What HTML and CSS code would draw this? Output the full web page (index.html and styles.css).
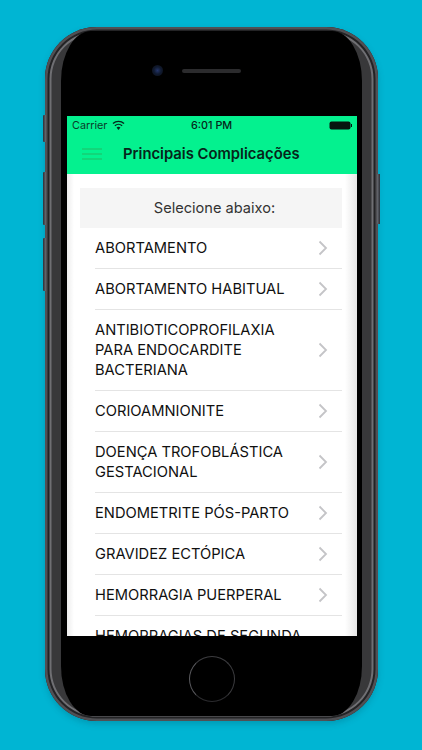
FILE: index.html
```html
<!DOCTYPE html>
<html lang="pt">
<head>
<meta charset="utf-8">
<title>Principais Complicações</title>
<link rel="stylesheet" href="styles.css">
</head>
<body>
<div class="phone">
  <span class="btn btn-mute"></span>
  <span class="btn btn-up"></span>
  <span class="btn btn-down"></span>
  <span class="btn btn-power"></span>
  <div class="bezel">
    <div class="top">
      <span class="camera"></span>
      <span class="speaker"></span>
    </div>
    <div class="screen">
      <header class="appbar">
        <div class="status">
          <span class="carrier">Carrier
            <svg class="wifi" width="13" height="10" viewBox="0 0 12 9"><path d="M6 9 4.200 6.900a2.600 2.600 0 0 1 3.600 0Z" fill="#06251a"/><path d="M2.700 5.200a4.800 4.800 0 0 1 6.600 0M.9 3.200a7.400 7.400 0 0 1 10.200 0" fill="none" stroke="#06251a" stroke-width="1.300"/></svg>
          </span>
          <span class="time">6:01 PM</span>
          <span class="battery"><span class="cell"></span><span class="nub"></span></span>
        </div>
        <div class="nav">
          <span class="burger"><i></i><i></i><i></i></span>
          <h1>Principais Complicações</h1>
        </div>
      </header>
      <main class="content">
        <div class="heading">Selecione abaixo:</div>
        <ul class="list">
          <li><span>ABORTAMENTO</span><svg class="chev" width="10" height="16" viewBox="0 0 10 16"><path d="M1.500 1.500 8 8l-6.500 6.500"/></svg></li>
          <li><span>ABORTAMENTO HABITUAL</span><svg class="chev" width="10" height="16" viewBox="0 0 10 16"><path d="M1.500 1.500 8 8l-6.500 6.500"/></svg></li>
          <li><span>ANTIBIOTICOPROFILAXIA<br>PARA ENDOCARDITE<br>BACTERIANA</span><svg class="chev" width="10" height="16" viewBox="0 0 10 16"><path d="M1.500 1.500 8 8l-6.500 6.500"/></svg></li>
          <li><span>CORIOAMNIONITE</span><svg class="chev" width="10" height="16" viewBox="0 0 10 16"><path d="M1.500 1.500 8 8l-6.500 6.500"/></svg></li>
          <li><span>DOENÇA TROFOBLÁSTICA<br>GESTACIONAL</span><svg class="chev" width="10" height="16" viewBox="0 0 10 16"><path d="M1.500 1.500 8 8l-6.500 6.500"/></svg></li>
          <li><span>ENDOMETRITE PÓS-PARTO</span><svg class="chev" width="10" height="16" viewBox="0 0 10 16"><path d="M1.500 1.500 8 8l-6.500 6.500"/></svg></li>
          <li><span>GRAVIDEZ ECTÓPICA</span><svg class="chev" width="10" height="16" viewBox="0 0 10 16"><path d="M1.500 1.500 8 8l-6.500 6.500"/></svg></li>
          <li><span>HEMORRAGIA PUERPERAL</span><svg class="chev" width="10" height="16" viewBox="0 0 10 16"><path d="M1.500 1.500 8 8l-6.500 6.500"/></svg></li>
          <li><span>HEMORRAGIAS DE SEGUNDA</span></li>
        </ul>
      </main>
    </div>
    <div class="bottom"><span class="home"></span></div>
  </div>
</div>
</body>
</html>
```
FILE: styles.css
```css
* { box-sizing: border-box; }
html, body { margin: 0; height: 100%; }
body {
  width: 422px;
  height: 750px;
  overflow: hidden;
  background: #00b5d3;
  padding: 27px 44px 0 45px;
  font-family: Inter, Roboto, "Liberation Sans", sans-serif;
}
.phone {
  position: relative;
  width: 333px;
  height: 694px;
  border-radius: 52px;
  background: #38383a;
  padding: 4px 16px 5px;
  box-shadow: inset 0 0 0 2.500px #505054, inset 0 0 0 4.500px #232325, inset 0 0 0 6.500px #6f6f73, 0 3px 6px rgba(0, 70, 90, .25);
}
.bezel {
  height: 100%;
  border-radius: 30px / 50px;
  background: #000;
  padding: 0 5px 0 6px;
  display: flex;
  flex-direction: column;
}
.top {
  height: 85px;
  flex: none;
  display: flex;
  align-items: center;
  padding: 0 0 6px 85px;
  gap: 19px;
}
.camera {
  width: 11px;
  height: 11px;
  border-radius: 50%;
  background: radial-gradient(circle, #24356a 0, #101a30 45%, #0b0d14 100%);
}
.speaker {
  width: 59px;
  height: 4px;
  border-radius: 2px;
  background: #2b2b2d;
}
.screen {
  width: 290px;
  height: 520px;
  flex: none;
  background: #fff;
  overflow: hidden;
  display: flex;
  flex-direction: column;
}
.appbar {
  height: 58px;
  flex: none;
  background: #04f18f;
  color: #06251a;
}
.status {
  height: 18px;
  display: flex;
  align-items: center;
  justify-content: space-between;
  padding: 0 5px;
  font-size: 10.800px;
  position: relative;
}
.carrier { display: flex; align-items: center; gap: 5px; color: #0a3b2a; }
.time {
  position: absolute;
  left: 124px;
  font-weight: 500;
}
.battery { display: flex; align-items: center; }
.cell {
  width: 20px;
  height: 7px;
  background: #071510;
  border-radius: 1.500px;
  box-shadow: 0 0 0 .5px #071510;
}
.nub { width: 1px; height: 3px; background: #071510; margin-left: 1px; }
.nav {
  display: flex;
  align-items: center;
  height: 40px;
  padding-left: 15px;
  gap: 21px;
}
.burger { width: 20px; display: flex; flex-direction: column; gap: 3.500px; }
.burger i { height: 1.500px; background: #12d67a; display: block; }
h1 {
  margin: 0;
  font-size: 14.800px;
  font-weight: 600;
  color: #06251a;
  white-space: nowrap;
}
.content {
  flex: 1;
  min-height: 0;
  padding: 14px 15px 0 13px;
  background: linear-gradient(90deg, #ededed 0, #fff 7px, #fff 278px, #e6e6e6 290px);
}
.heading {
  height: 40px;
  background: #f5f5f5;
  display: flex;
  align-items: center;
  justify-content: center;
  padding-left: 7px;
  font-size: 14.600px;
  color: #333;
}
.list { list-style: none; margin: 0; padding: 0 0 0 15px; }
.list li {
  display: flex;
  align-items: center;
  justify-content: space-between;
  padding: 10px 14px 10px 0;
  border-bottom: 1px solid #e4e4e4;
  font-size: 14.700px;
  line-height: 20px;
  color: #101010;
  white-space: nowrap;
}
.chev { flex: none; }
.chev path { fill: none; stroke: #c4c4c7; stroke-width: 1.800; }
.bottom {
  flex: 1;
  display: flex;
  justify-content: center;
  align-items: flex-start;
  padding-top: 20px;
  padding-right: 1px;
}
.home {
  width: 46px;
  height: 46px;
  border-radius: 50%;
  border: 1.500px solid #3d3d40;
  border-left-color: #5c5c60;
  border-bottom-color: #2c2c2f;
}
.btn { position: absolute; background: linear-gradient(90deg, #2c2f36, #6a6c73); border-radius: 1px 0 0 1px; }
.btn-mute { left: -2px; top: 88px; width: 3px; height: 27px; }
.btn-up { left: -2px; top: 145px; width: 3px; height: 53px; }
.btn-down { left: -2px; top: 211px; width: 3px; height: 53px; }
.btn-power { right: -2px; top: 147px; width: 3px; height: 50px; background: linear-gradient(90deg, #6a6c73, #2c2f36); }
```
